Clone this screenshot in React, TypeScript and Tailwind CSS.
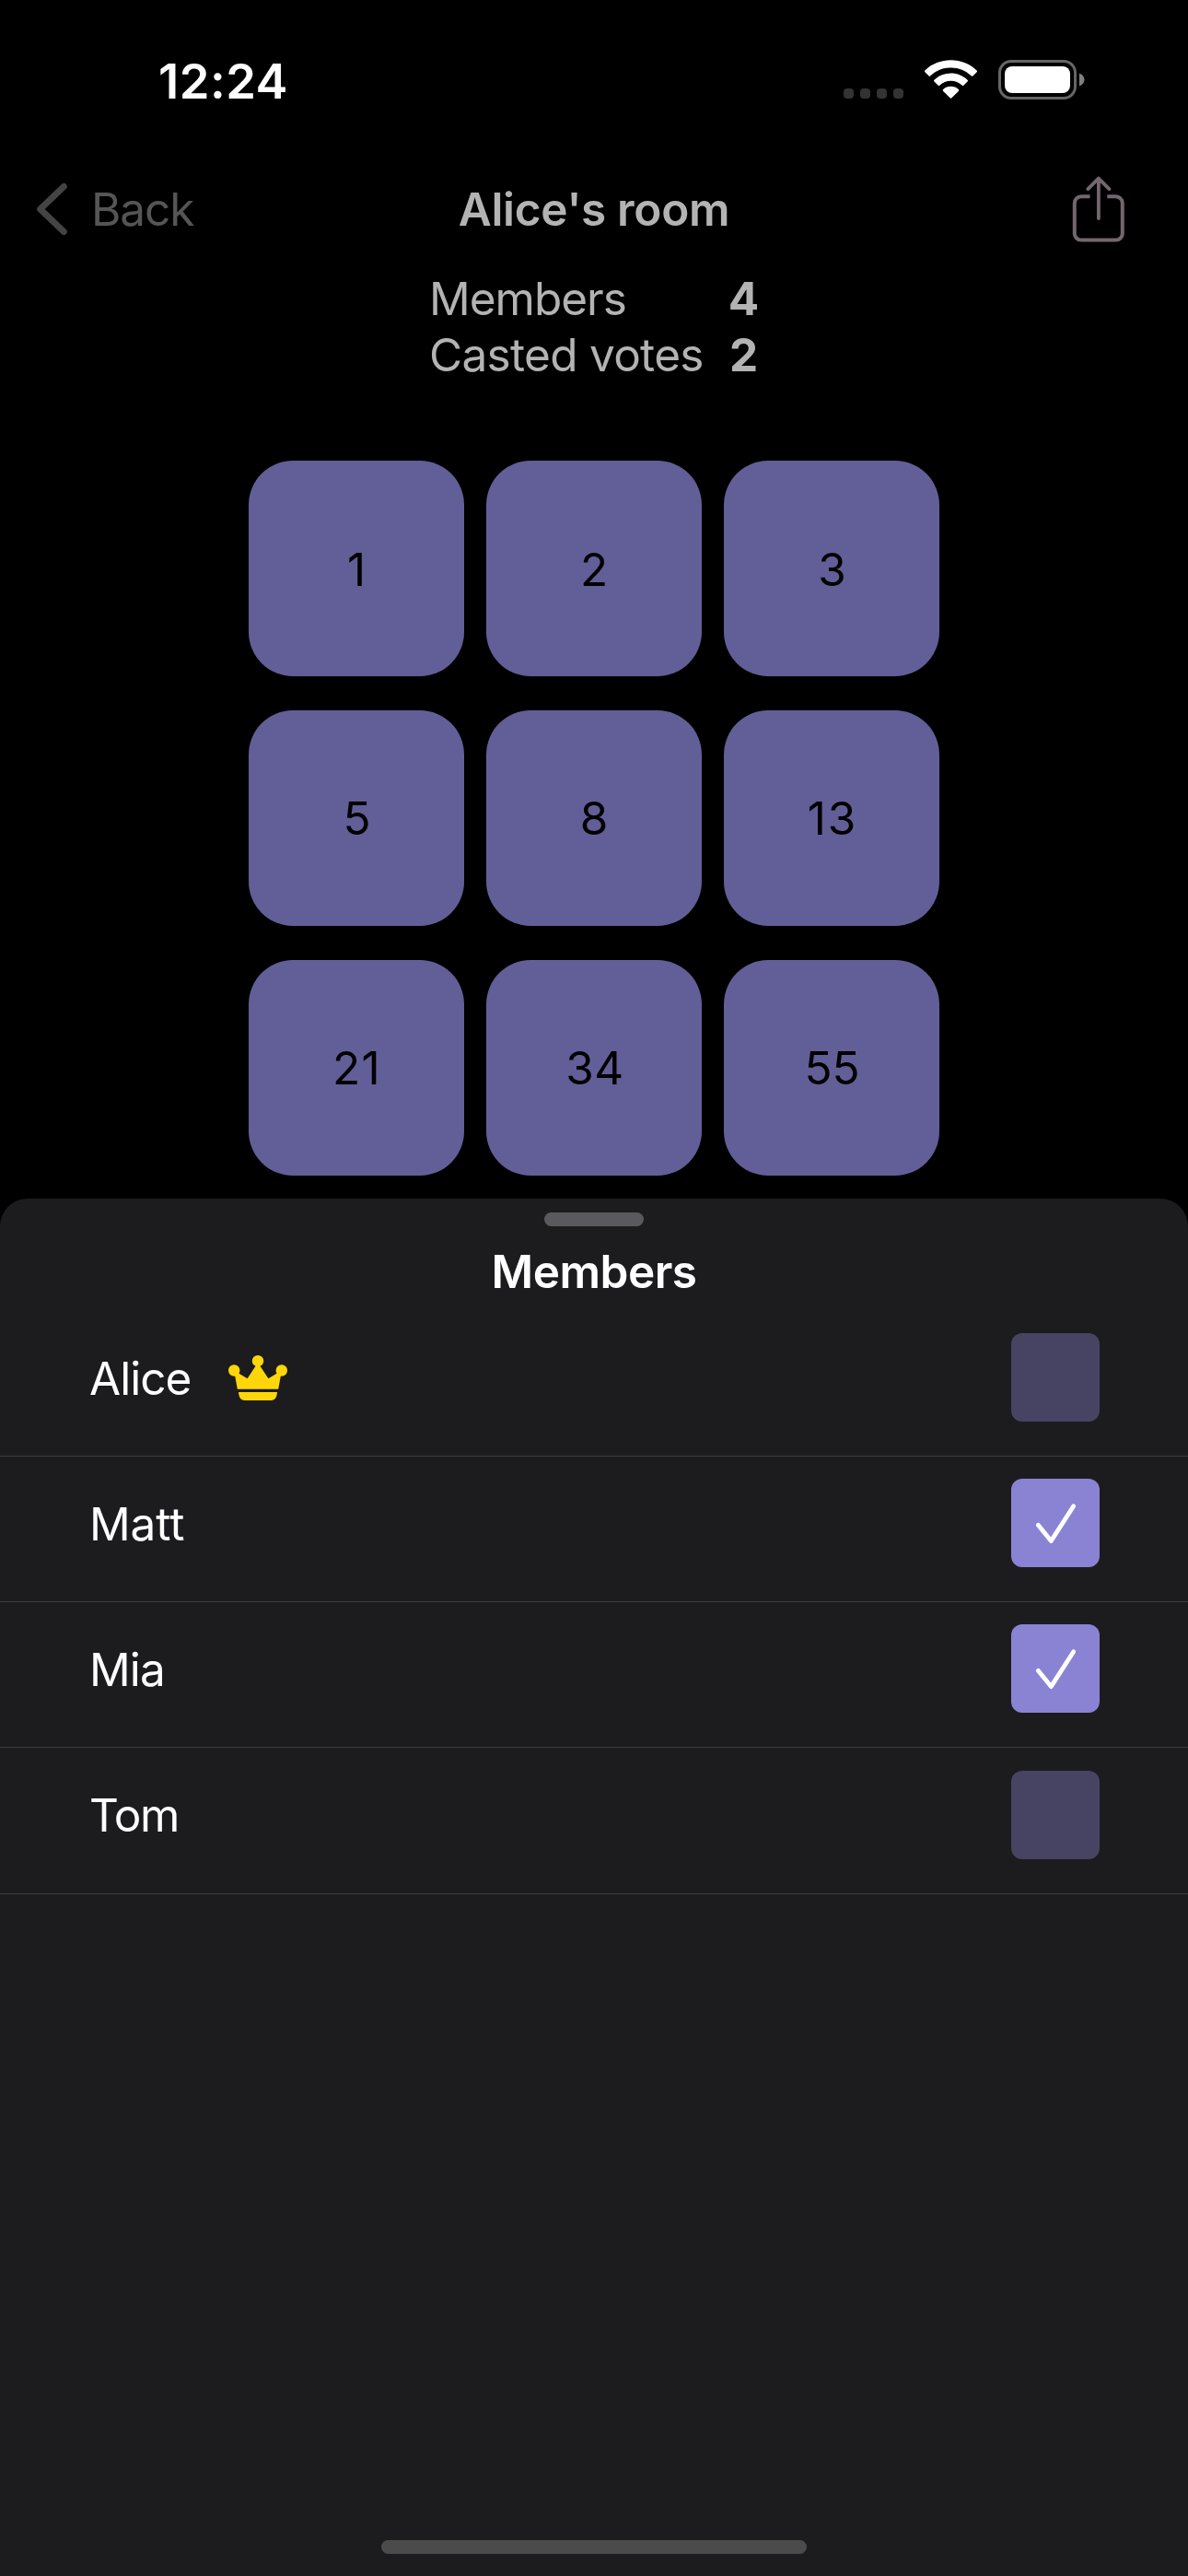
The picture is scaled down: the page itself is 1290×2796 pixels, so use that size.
type Member = {
  name: string;
  voted: boolean;
  owner?: boolean;
  nameClass: string;
  rowClass: string;
};

const members: Member[] = [
  { name: 'Alice', voted: false, owner: true, nameClass: 'mt-[19px] tracking-[-1px]', rowClass: 'h-[159px] pt-[25px]' },
  { name: 'Matt', voted: true, nameClass: 'mt-[19px] tracking-[-0.1px]', rowClass: 'h-[158px] pt-[24px]' },
  { name: 'Mia', voted: true, nameClass: 'mt-[19px] tracking-[-0.85px]', rowClass: 'h-[158px] pt-[24px]' },
  { name: 'Tom', voted: false, nameClass: 'mt-[18px] tracking-[-1.4px]', rowClass: 'h-[159px] pt-[25px]' },
];

const cards: { value: string; textClass: string }[] = [
  { value: '1', textClass: 'pt-[2px]' },
  { value: '2', textClass: 'pt-[2px]' },
  { value: '3', textClass: 'pt-[2px] pl-[1px]' },
  { value: '5', textClass: 'pl-[1px]' },
  { value: '8', textClass: '' },
  { value: '13', textClass: 'tracking-[1.8px] pl-[2px]' },
  { value: '21', textClass: 'tracking-[1.3px] pl-[1px]' },
  { value: '34', textClass: 'tracking-[0.4px] pl-[2px]' },
  { value: '55', textClass: 'pl-[1px]' },
];

function Wifi() {
  return (
    <svg className="h-[42px] w-[57px]" viewBox="0 0 57 42" fill="#fff">
      <path d="M28.5 0.2C39.5 0.2 49.4 4.4 56.6 11.4a1.3 1.3 0 0 1 0 1.9l-4 4a1.3 1.3 0 0 1-1.9 0A31.8 31.8 0 0 0 28.5 8.6 31.8 31.8 0 0 0 6.3 17.3a1.3 1.3 0 0 1-1.9 0l-4-4a1.3 1.3 0 0 1 0-1.9C7.600 4.400 17.500 0.200 28.500 0.200Z" />
      <path d="M28.5 14.6c7 0 13.300 2.700 18 7.100a1.300 1.300 0 0 1 0 1.900l-4 4a1.300 1.300 0 0 1-1.900 0 17.600 17.600 0 0 0-24.200 0 1.300 1.300 0 0 1-1.900 0l-4-4a1.300 1.300 0 0 1 0-1.900c4.700-4.400 11-7.100 18-7.100Z" />
      <path d="M28.500 28.800c3.200 0 6.100 1.200 8.300 3.200a1.300 1.300 0 0 1 0 1.900l-7.400 7.400a1.300 1.300 0 0 1-1.800 0L20.200 33.900a1.300 1.300 0 0 1 0-1.900c2.200-2 5.100-3.200 8.300-3.200Z" />
    </svg>
  );
}

function Battery() {
  return (
    <svg className="h-[43px] w-[94px]" viewBox="0 0 94 43">
      <rect x="1.500" y="1.500" width="82" height="40" rx="12.500" fill="none" stroke="#666" strokeWidth="3" />
      <rect x="7" y="7" width="71" height="29" rx="8" fill="#fff" />
      <path d="M88 14.500c3.300 1.200 5.500 3.900 5.500 7s-2.200 5.800-5.500 7Z" fill="#808080" />
    </svg>
  );
}

function StatusBar() {
  return (
    <div className="flex h-[177px] items-start justify-between pt-[58px] pr-[112px] pl-[172px]">
      <div className="text-[52.5px] leading-[60px] font-semibold tracking-[0.52px] text-white">12:24</div>
      <div className="mt-[7px] flex items-start">
        <div className="mt-[31px] mr-[23px] flex gap-[7px]">
          {[0, 1, 2, 3].map((i) => (
            <div key={i} className="size-[11px] rounded-[4px] bg-[#333]" />
          ))}
        </div>
        <Wifi />
        <div className="ml-[23px]">
          <Battery />
        </div>
      </div>
    </div>
  );
}

function NavBar() {
  return (
    <div className="flex h-[100px] items-center pr-[69px] pl-[39px]">
      <div className="flex w-[270px] items-center">
        <svg className="h-[58px] w-[35px]" viewBox="0 0 35 58" fill="none" stroke="#444" strokeWidth="7" strokeLinecap="round" strokeLinejoin="round">
          <path d="M30.300 4.500 4.700 29 30.300 53.500" />
        </svg>
        <div className="ml-[25px] text-[49.5px] leading-[60px] tracking-[-1.05px] text-[#555]">Back</div>
      </div>
      <div className="flex-1 text-center text-[49.5px] leading-[60px] font-semibold tracking-[-0.29px] text-[#b3b3b3]">
        Alice&apos;s room
      </div>
      <div className="flex w-[240px] justify-end">
        <svg className="h-[72px] w-[57px]" viewBox="0 0 57 72" fill="none" stroke="#74666f" strokeWidth="4">
          <path d="M19.500 22.200H10a7.200 7.200 0 0 0-7.200 7.200V62.400a7.200 7.200 0 0 0 7.200 7.200H47.600a7.200 7.200 0 0 0 7.200-7.200V29.400a7.200 7.200 0 0 0-7.200-7.200H38.300" />
          <path d="M28.900 3V46M17.400 14.200 28.900 2.600 40.400 14.200" strokeWidth="3.800" strokeLinecap="round" strokeLinejoin="round" />
        </svg>
      </div>
    </div>
  );
}

function Crown() {
  return (
    <svg className="h-[49px] w-[64px]" viewBox="0 0 64 49" fill="#ffd60a">
      <circle cx="32" cy="6.200" r="6.200" />
      <circle cx="6.200" cy="16.500" r="6.200" />
      <circle cx="57.800" cy="16.500" r="6.200" />
      <path d="M7 21.500 11 19.500 20.600 25.200 30 11H34L43.400 25.200 53 19.500 57 21.500 54.200 36.800H9.800Z" />
      <path d="M11 40H53C52.600 45.500 50.800 49 46.300 49H17.700C13.200 49 11.400 45.500 11 40Z" />
    </svg>
  );
}

function Checkbox({ checked }: { checked: boolean }) {
  return (
    <div className={`size-[96px] rounded-[12px] ${checked ? 'bg-[#8a83d4]' : 'bg-[#474463]'}`}>
      {checked && (
        <svg className="size-[96px]" viewBox="0 0 96 96" fill="none" stroke="#fff" strokeWidth="4.800" strokeLinecap="round" strokeLinejoin="round">
          <path d="M29.300 50.300 43.300 67.600 67.700 29.800" />
        </svg>
      )}
    </div>
  );
}

function MembersSheet() {
  return (
    <div className="mt-[25px] flex flex-1 flex-col rounded-t-[30px] bg-[#1c1c1e] pt-[15px]">
      <div className="h-[15px] w-[108px] self-center rounded-full bg-[#5a5a5e]" />
      <div className="mt-[19px] text-center text-[49.5px] leading-[60px] font-semibold tracking-[-0.5px] text-white">Members</div>
      <div className="mt-[12px]">
        {members.map((m) => (
          <div key={m.name} className={`flex items-start justify-between border-b border-[#3d3d41] pr-[96px] pl-[97px] ${m.rowClass}`}>
            <div className="flex items-start">
              <div className={`text-[49.5px] leading-[60px] text-white ${m.nameClass}`}>{m.name}</div>
              {m.owner && (
                <div className="mt-[24px] ml-[41px]">
                  <Crown />
                </div>
              )}
            </div>
            <Checkbox checked={m.voted} />
          </div>
        ))}
      </div>
      <div className="mt-auto mb-[24px] h-[15px] w-[462px] self-center rounded-full bg-[#4b4b4b]" />
    </div>
  );
}

export default function App() {
  return (
    <div className="flex h-[2796px] w-[1290px] flex-col overflow-hidden bg-black font-['Inter','Liberation_Sans',sans-serif]">
      <StatusBar />
      <NavBar />
      <div className="mt-[17px] ml-[466px] grid grid-cols-[311px_61px] text-[49.5px] leading-[61px] text-[#b3b3b3]">
        <div className="tracking-[-1px]">Members</div>
        <div className="text-center font-bold">4</div>
        <div className="tracking-[-0.7px] whitespace-nowrap">Casted votes</div>
        <div className="text-center font-bold">2</div>
      </div>
      <div className="mt-[84px] grid grid-cols-[234px_234px_234px] justify-center gap-x-[24px] gap-y-[37px]">
        {cards.map((c) => (
          <div key={c.value} className="flex h-[234px] items-center justify-center rounded-[48px] bg-[#625e97] text-[49.5px] leading-[60px] text-black">
            <span className={c.textClass}>{c.value}</span>
          </div>
        ))}
      </div>
      <MembersSheet />
    </div>
  );
}
